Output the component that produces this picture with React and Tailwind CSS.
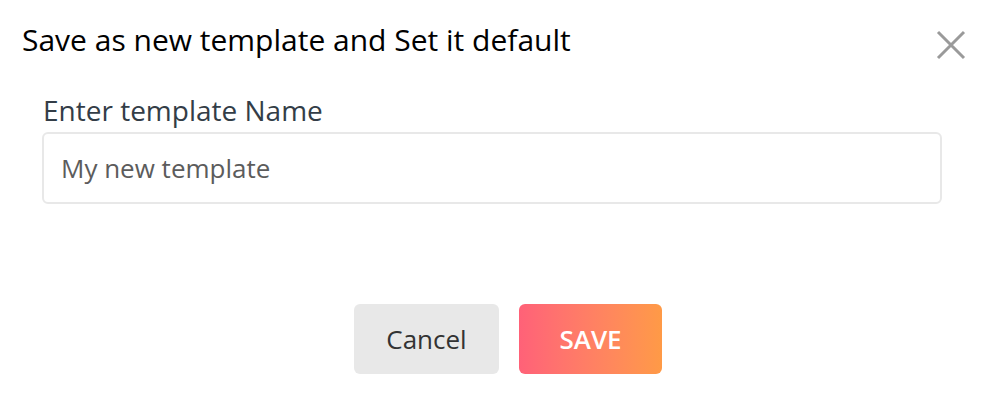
import React, { useState } from 'react';

export default function App() {
  const [name, setName] = useState('');

  return (
    <div className="w-[986px] h-[414px] bg-white font-['Open_Sans',sans-serif] relative">
      <div className="flex items-start justify-between pl-[22px] pr-[20px] pt-[22px]">
        <h2 className="text-[30px] leading-[36px] text-black">Save as new template and Set it default</h2>
        <button className="mt-[8px] w-[30px] h-[30px] flex items-center justify-center text-[#9a9a9a]">
          <svg width="30" height="30" viewBox="0 0 30 30" fill="none" stroke="currentColor" strokeWidth="3">
            <path d="M2 2 L28 28 M28 2 L2 28" />
          </svg>
        </button>
      </div>

      <div className="pl-[42px] pr-[44px] pt-[34px]">
        <label className="block text-[28px] leading-[32px] text-[#333d47] pl-[1px]">Enter template Name</label>
        <input
          value={name}
          onChange={(e) => setName(e.target.value)}
          placeholder="My new template"
          className="mt-[6px] w-full h-[72px] border-2 border-[#e8e8e8] rounded-[6px] px-[17px] text-[26px] text-[#555] placeholder:text-[#5c5c5c] outline-none"
        />
      </div>

      <div className="flex justify-center gap-[20px] pt-[100px] pl-[30px]">
        <button className="w-[145px] h-[70px] rounded-[6px] bg-[#e8e8e8] text-[26px] text-[#333]">Cancel</button>
        <button className="w-[143px] h-[70px] rounded-[6px] bg-gradient-to-r from-[#ff6178] to-[#ff9a46] text-[26px] font-semibold text-white">SAVE</button>
      </div>
    </div>
  );
}
